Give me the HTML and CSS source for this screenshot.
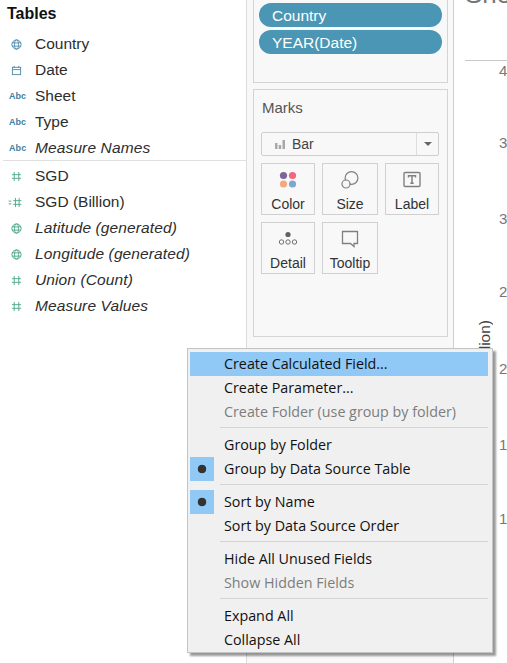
FILE: index.html
```html
<!DOCTYPE html>
<html>
<head>
    <title>Tables and Marks</title>
    <link rel="stylesheet" href="styles.css">
</head>
<body>
  <svg class="defs" width="0" height="0">
    <symbol id="globe" viewBox="0 0 12 12">
      <g fill="none" stroke="currentColor">
        <circle cx="6" cy="6" r="5"/>
        <ellipse cx="6" cy="6" rx="2.200" ry="5"/>
        <path d="M1 4.200h10M1 7.800h10"/>
      </g>
    </symbol>
    <symbol id="calendar" viewBox="0 0 12 12">
      <g fill="none" stroke="currentColor">
        <rect x="1.500" y="2.500" width="9" height="8"/>
        <path d="M1.500 5h9M3.500 1v2M8.500 1v2"/>
      </g>
    </symbol>
    <symbol id="hash" viewBox="0 0 12 12">
      <path fill="none" stroke="currentColor" d="M3.500 1v10M8.500 1v10M1 4h10M1 8h10"/>
    </symbol>
    <symbol id="binhash" viewBox="0 0 14 12">
      <path fill="none" stroke="currentColor" d="M7.500 1v10M11.500 1v10M5 4h9M5 8h9M0 4.500h3M0 7.500h3"/>
    </symbol>
  </svg>

  <div class="page">
    <aside class="data-pane">
      <h1 class="pane-title">Tables</h1>
      <ul class="fields">
        <li class="field"><svg class="ico dim"><use href="#globe"/></svg><span>Country</span></li>
        <li class="field"><svg class="ico dim"><use href="#calendar"/></svg><span>Date</span></li>
        <li class="field"><span class="abc">Abc</span><span>Sheet</span></li>
        <li class="field"><span class="abc">Abc</span><span>Type</span></li>
        <li class="field calc"><span class="abc">Abc</span><span>Measure Names</span></li>
      </ul>
      <ul class="fields measures">
        <li class="field"><svg class="ico meas"><use href="#hash"/></svg><span>SGD</span></li>
        <li class="field"><svg class="ico-wide meas"><use href="#binhash"/></svg><span>SGD (Billion)</span></li>
        <li class="field calc"><svg class="ico meas"><use href="#globe"/></svg><span>Latitude (generated)</span></li>
        <li class="field calc"><svg class="ico meas"><use href="#globe"/></svg><span>Longitude (generated)</span></li>
        <li class="field calc"><svg class="ico meas"><use href="#hash"/></svg><span>Union (Count)</span></li>
        <li class="field calc"><svg class="ico meas"><use href="#hash"/></svg><span>Measure Values</span></li>
      </ul>
    </aside>

    <section class="shelves">
      <div class="card rows-card">
        <div class="pill">Country</div>
        <div class="pill">YEAR(Date)</div>
      </div>
      <div class="card marks-card">
        <div class="marks-title">Marks</div>
        <div class="mark-select">
          <svg class="bar-ico" width="10" height="10" viewBox="0 0 10 10">
            <path fill="#a8a8a8" d="M0 4h2.500v6H0zM3.700 6h2.500v4H3.700zM7.500 1H10v9H7.500z"/>
          </svg>
          <span class="mark-type">Bar</span>
          <span class="mark-arrow"></span>
        </div>
        <div class="mark-grid">
          <div class="mark-btn">
            <svg width="18" height="18" viewBox="0 0 18 18">
              <circle cx="4.500" cy="4.500" r="3.600" fill="#7b6596"/>
              <circle cx="13.500" cy="4.500" r="3.600" fill="#f0677f"/>
              <circle cx="4.500" cy="13" r="3.600" fill="#f2a97c"/>
              <circle cx="13.500" cy="13" r="3.600" fill="#7ea6cf"/>
            </svg>
            <span>Color</span>
          </div>
          <div class="mark-btn">
            <svg width="18" height="18" viewBox="0 0 18 18" fill="none" stroke="#808080" stroke-width="1.200">
              <circle cx="10.500" cy="7" r="6.400"/>
              <circle cx="5" cy="13" r="4" fill="#f7f7f7"/>
            </svg>
            <span>Size</span>
          </div>
          <div class="mark-btn">
            <svg width="18" height="18" viewBox="0 0 18 18" fill="none" stroke="#808080">
              <rect x="1" y="1.500" width="16" height="14" rx="1" stroke-width="1.400"/>
              <path stroke-width="1.500" d="M5.500 6.500V4.800h7v1.700M9 4.800v7.400M7.300 12.200h3.400"/>
            </svg>
            <span>Label</span>
          </div>
          <div class="mark-btn">
            <svg width="20" height="18" viewBox="0 0 20 18" fill="none" stroke="#707070">
              <circle cx="10" cy="4.500" r="2.600" fill="#606060" stroke="none"/>
              <circle cx="3.500" cy="12" r="2.200"/>
              <circle cx="10" cy="12" r="2.200"/>
              <circle cx="16.500" cy="12" r="2.200"/>
            </svg>
            <span>Detail</span>
          </div>
          <div class="mark-btn">
            <svg width="18" height="18" viewBox="0 0 18 18" fill="none" stroke="#808080" stroke-width="1.300">
              <path d="M1.500 1.500h15v12h-3.500v3l-3.500-3H1.500z"/>
            </svg>
            <span>Tooltip</span>
          </div>
        </div>
      </div>
    </section>

    <main class="chart">
      <div class="sheet-title">Sheet 1</div>
      <div class="axis">
        <span>4</span><span>3</span><span>3</span><span>2</span><span>2</span><span>1</span><span>1</span>
      </div>
      <div class="axis-label">SGD (Billion)</div>
    </main>
  </div>

  <div class="menu">
    <div class="menu-item active">Create Calculated Field...</div>
    <div class="menu-item">Create Parameter...</div>
    <div class="menu-item off">Create Folder (use group by folder)</div>
    <div class="menu-sep"></div>
    <div class="menu-item">Group by Folder</div>
    <div class="menu-item checked">Group by Data Source Table</div>
    <div class="menu-sep"></div>
    <div class="menu-item checked">Sort by Name</div>
    <div class="menu-item">Sort by Data Source Order</div>
    <div class="menu-sep"></div>
    <div class="menu-item">Hide All Unused Fields</div>
    <div class="menu-item off">Show Hidden Fields</div>
    <div class="menu-sep"></div>
    <div class="menu-item">Expand All</div>
    <div class="menu-item">Collapse All</div>
  </div>
</body>
</html>
```

FILE: styles.css
```css
* {
  box-sizing: border-box;
}

body {
  margin: 0;
  height: 663px;
  overflow: hidden;
  position: relative;
  background-color: #fff;
  font-family: "Liberation Sans", sans-serif;
  color: #2b2b2b;
}

.defs {
  display: block;
  height: 0;
}

.page {
  display: flex;
  height: 663px;
}

/* left data pane */
.data-pane {
  width: 246px;
  flex: none;
  padding-top: 4px;
}

.pane-title {
  margin: 0 0 0 7px;
  height: 27px;
  font-size: 16px;
  line-height: 20px;
  font-weight: bold;
  color: #111;
}

.fields {
  list-style: none;
  margin: 0;
  padding: 0;
}

.measures {
  margin-left: 3px;
  padding: 2px 0 0;
  border-top: 1px solid #e0e0e0;
  margin-top: -1px;
}

.field {
  display: flex;
  align-items: center;
  height: 26px;
  font-size: 15.5px;
  color: #2d2d2d;
}

.field span:last-child {
  margin-left: 35px;
}

.measures .field span:last-child {
  margin-left: 32px;
}

.field .abc {
  position: absolute;
  left: 9px;
  margin: 0;
  font-size: 9px;
  font-weight: bold;
  font-style: normal;
  color: #3f7f9f;
}

.field.calc {
  font-style: italic;
  letter-spacing: 0.12px;
}

.ico,
.ico-wide {
  position: absolute;
  width: 11px;
  height: 11px;
  left: 11px;
}

.ico-wide {
  left: 8px;
  width: 14px;
  height: 11px;
}

.dim {
  color: #4f8ba8;
}

.meas {
  color: #4ea684;
}

/* middle shelves */
.shelves {
  width: 208px;
  flex: none;
  background-color: #f8f8f8;
  border-left: 1px solid #dcdcdc;
  border-right: 1px solid #cfcfcf;
  padding: 0 5px 0 6px;
}

.card {
  border: 1px solid #d4d4d4;
  width: 195px;
}

.rows-card {
  height: 83px;
  padding: 3px 5px 0;
  border-top: none;
}

.pill {
  height: 24px;
  margin-bottom: 3px;
  padding-left: 13px;
  border-radius: 12px;
  background-color: #4a96b4;
  color: #fff;
  font-size: 15.5px;
  line-height: 25px;
}

.marks-card {
  height: 248px;
  margin-top: 6px;
  padding: 0 7px;
}

.marks-title {
  height: 42px;
  padding: 9px 0 0 1px;
  font-size: 15px;
  line-height: 18px;
  color: #555;
}

.mark-select {
  display: flex;
  align-items: center;
  height: 24px;
  width: 178px;
  padding-left: 13px;
  border: 1px solid #cfcfcf;
  border-radius: 2px;
}

.mark-type {
  margin-left: 7px;
  flex: 1;
  font-size: 14px;
  color: #444;
}

.mark-arrow {
  display: flex;
  align-items: center;
  justify-content: center;
  width: 22px;
  height: 100%;
  border-left: 1px solid #ddd;
}

.mark-arrow::after {
  content: "";
  border-top: 4px solid #666;
  border-left: 4px solid transparent;
  border-right: 4px solid transparent;
}

.mark-grid {
  display: grid;
  grid-template-columns: 54px 56px 54px;
  grid-auto-rows: 52px;
  column-gap: 7px;
  row-gap: 7px;
  margin-top: 7px;
}

.mark-btn {
  display: flex;
  flex-direction: column;
  align-items: center;
  padding-top: 7px;
  border: 1px solid #d0d0d0;
  font-size: 14px;
  color: #333;
}

.mark-btn span {
  margin-top: 6px;
  line-height: 18px;
}

.mark-btn svg {
  display: block;
}

/* chart, mostly hidden */
.chart {
  flex: 1;
  position: relative;
  overflow: hidden;
  padding-left: 11px;
}

.sheet-title {
  height: 83px;
  margin-top: -22px;
  border-bottom: 1px solid #c8c8c8;
  font-size: 26px;
  line-height: 32px;
  color: #777;
  white-space: nowrap;
}

.axis {
  display: grid;
  grid-template-rows: 72px 76px 73px 77px 76px 74px 20px;
  padding-left: 34px;
  font-size: 15px;
  line-height: 20px;
  color: #777;
}

.axis-label {
  position: absolute;
  left: 23px;
  top: 320px;
  writing-mode: vertical-rl;
  transform: rotate(180deg);
  font-size: 15.5px;
  line-height: 15px;
  color: #444;
}

/* context menu */
.menu {
  position: absolute;
  left: 187px;
  top: 348px;
  width: 306px;
  height: 305px;
  padding: 3px 4px 0 2px;
  background-color: #f0f0f0;
  border: 1px solid #c4c4c4;
  box-shadow: 3px 3px 2px rgba(0, 0, 0, 0.4);
  font-family: "Open Sans", "Liberation Sans", sans-serif;
  font-size: 14.3px;
  color: #111;
}

.menu-item {
  position: relative;
  height: 24px;
  padding-left: 34px;
  line-height: 24px;
  white-space: nowrap;
}

.menu-item.active {
  background-color: #90c8f6;
}

.menu-item.off {
  color: #7d7d7d;
}

.menu-item.checked::before {
  content: "";
  position: absolute;
  left: 0;
  top: 0;
  width: 24px;
  height: 24px;
  background: radial-gradient(circle, #333 4px, #90c8f6 4.6px);
}

.menu-sep {
  height: 1px;
  margin: 3px 0 5px 30px;
  background-color: #d4d4d4;
}
```
